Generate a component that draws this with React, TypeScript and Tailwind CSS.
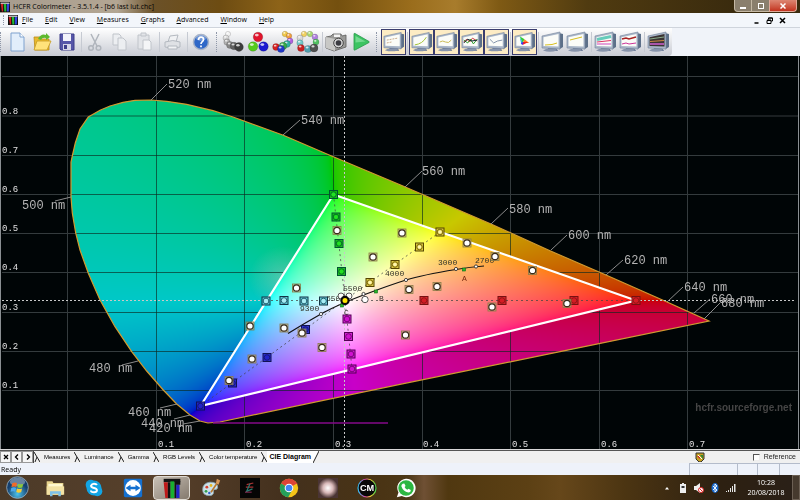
import React, { useLayoutEffect, useRef } from "react";

/* ---------- CIE chart data (chart space, origin at window top-left) ---------- */

const TOP = 56;
const CHART_W = 800;
const CHART_H = 394;

const LOCUS =
  "M208 423 L200 421 L190 415 L176.700 404 L163.300 390 L146.700 371 L131.700 351.700 L115 326.700 L100 300 L88.300 273.300 L80 250 L75.700 233 L72.300 213 L71 197 L71 162 L72.300 156 L75.300 143 L80 129 L88.300 117 L100 110.300 L110 106 L123 102.300 L135 100.300 L151 100 L166.700 101.300 L186.700 104.300 L213 110.700 L233 117 L283.300 135.300 L333.300 156.700 L400 184.700 L491 224 L550 250.700 L606 275 L667 302 L709 321 L560 351.700 L400 384.300 L220 422 Z";
const TRIANGLE = "M333.500 194.500 L636 300.500 L200.500 406 Z";

const X_TICKS = [67.5, 156.5, 244.5, 333.5, 422.5, 510.5, 599.5, 687.5];
const Y_TICKS = [76.5, 116, 155.5, 194.5, 233.5, 272.5, 312.5, 351.5, 390.5];

const X_LABELS: [string, number][] = [
  ["0.1", 158], ["0.2", 246], ["0.3", 335], ["0.4", 423], ["0.5", 512], ["0.6", 601], ["0.7", 689],
];
const Y_LABELS: [string, number][] = [
  ["0.8", 114], ["0.7", 153], ["0.6", 192], ["0.5", 231], ["0.4", 270], ["0.3", 310], ["0.2", 349], ["0.1", 388],
];

/* wavelength, text x, baseline, leader from/to */
const WAVES: [string, number, number, number, number, number, number][] = [
  ["520 nm", 168, 88, 151, 100, 167, 84],
  ["540 nm", 301, 124, 283, 135, 300, 120],
  ["560 nm", 422, 175, 405, 187, 422, 171],
  ["580 nm", 509, 213, 491, 224, 508, 208],
  ["600 nm", 568, 239, 551, 250, 567, 235],
  ["620 nm", 624, 264, 606, 275, 623, 260],
  ["640 nm", 684, 291, 667, 302, 683, 287],
  ["660 nm", 711, 303, 694, 313, 710, 299],
  ["680 nm", 721, 307, 704, 319, 720, 303],
  ["500 nm", 22, 209, 55, 201, 71, 197],
  ["480 nm", 89, 372, 122, 365, 138, 361],
  ["460 nm", 128, 416, 160, 408, 177, 404],
  ["440 nm", 141, 427, 174, 419, 190, 415],
  ["420 nm", 149, 432, 183, 424, 200, 421],
];

const TARGETS: [string, string, [number, number][]][] = [
  ["#10b810", "#053", [[333.5, 194.5], [336, 217], [339, 243.5], [341.5, 271.5]]],
  ["#d010d0", "#505", [[347, 319], [348.5, 336.5], [351, 354], [352, 369]]],
  ["#2222c8", "#115", [[305.5, 329.5], [267, 357.5], [232.5, 383], [200.5, 406]]],
  ["#5cc4d4", "#134", [[266, 301], [284, 300.5], [304, 301], [323.5, 301]]],
  ["#d41c24", "#711", [[424, 300.5], [502, 300.5], [574, 300.5], [636, 300.5]]],
  ["#dcc83c", "#540", [[440, 232], [419.5, 247], [395, 264.5], [370, 282.5]]],
];

const MEASURED: [number, number][] = [
  [337, 230.5], [402, 233], [373, 257], [467, 243], [495, 256.5], [532.5, 270.5],
  [409, 289.5], [437, 286.5], [492, 307], [567, 303.5], [405.5, 335], [296.5, 288],
  [250, 326], [284, 328], [302, 333], [252, 359], [322, 347.5], [229, 380.5],
];

/*
 * Fills the spectral locus with the sRGB colour of each chromaticity.
 * Colours out of gamut are pulled toward white onto the gamut edge and dimmed.
 */
function paintGamut(canvas: HTMLCanvasElement) {
  const ctx = canvas.getContext("2d");
  if (!ctx) return;
  const img = ctx.createImageData(CHART_W, CHART_H);
  for (let py = 0; py < CHART_H; py++) {
    for (let px = 0; px < CHART_W; px++) {
      const x = (px - 67.8) / 886;
      const y = (429.5 - (py + TOP)) / 392;
      const z = 1 - x - y;
      const r = 3.2406 * x - 1.5372 * y - 0.4986 * z;
      const g = -0.9689 * x + 1.8758 * y + 0.0415 * z;
      const b = 0.0557 * x - 0.204 * y + 1.057 * z;
      const low = Math.min(0, r, g, b);
      const top = Math.max(r, g, b) - low;
      const gain = low < 0 ? 200 : 255;
      const o = (py * CHART_W + px) * 4;
      [r, g, b].forEach((v, i) => {
        img.data[o + i] = gain * Math.pow((v - low) / top, 0.4545);
      });
      img.data[o + 3] = 255;
    }
  }
  ctx.putImageData(img, 0, 0);
  ctx.translate(0, -TOP);
  ctx.globalCompositeOperation = "destination-in";
  ctx.fill(new Path2D(LOCUS));
}

function CieChart() {
  const ref = useRef<HTMLCanvasElement>(null);
  useLayoutEffect(() => {
    if (ref.current) paintGamut(ref.current);
  }, []);
  const grid = (
    <>
      {X_TICKS.map((x) => <path key={"x" + x} d={`M${x} 56V449`} />)}
      {Y_TICKS.map((y) => <path key={"y" + y} d={`M2 ${y}H798`} />)}
    </>
  );
  return (
    <svg viewBox="0 56 800 394" className="block w-full bg-[#000506]" role="img" aria-label="CIE Diagram">
      <defs>
        <clipPath id="ring"><path d={LOCUS + TRIANGLE} clipRule="evenodd" /></clipPath>
        <radialGradient id="haze">
          <stop offset="0" stopColor="#9cc8b8" stopOpacity=".5" />
          <stop offset="1" stopColor="#9cc8b8" stopOpacity="0" />
        </radialGradient>
      </defs>
      <g stroke="#343b3d" strokeWidth="1">{grid}</g>
      <foreignObject x="0" y="56" width="800" height="394">
        <canvas ref={ref} width={CHART_W} height={CHART_H} className="block" />
      </foreignObject>
      <ellipse cx="283" cy="278" rx="34" ry="32" fill="url(#haze)" clipPath="url(#ring)" />
      <g stroke="#0a2a20" strokeOpacity=".65" clipPath="url(#ring)">{grid}</g>
      <path d={LOCUS} fill="none" stroke="#d09a30" strokeWidth="1.200" />
      <path d="M213 423H388" stroke="#850a8a" strokeWidth="1.500" />

      <g stroke="#c8c8c8" strokeDasharray="2 2">
        <path d="M344.500 56V449" />
        <path d="M2 300.500H266M636 300.500H794" />
      </g>
      <g stroke="#444" strokeOpacity=".75" strokeDasharray="2 3" fill="none">
        <path d="M266 300.500H636M333.500 194.500L345 300L352 369M440 232L345 300L200.500 406" />
      </g>
      <path d={TRIANGLE} fill="none" stroke="#fff" strokeWidth="2.200" />

      <g fontFamily="'Liberation Mono', monospace" fontSize="12" fill="#b4b4b4">
        {WAVES.map(([t, x, y, x1, y1, x2, y2]) => (
          <g key={t}>
            <path d={`M${x1} ${y1}L${x2} ${y2}`} stroke="#8c8c8c" />
            <text x={x} y={y} fontSize="12">{t}</text>
          </g>
        ))}
      </g>
      <g fontFamily="'Liberation Mono', monospace" fontSize="9" fill="#e0e0e0">
        {X_LABELS.map(([t, x]) => <text key={t} x={x} y="447">{t}</text>)}
        {Y_LABELS.map(([t, y]) => <text key={t} x="2" y={y}>{t}</text>)}
      </g>

      <path d="M288 333.500Q305 323 321 314T363.500 295T406 280T456 269.500Q470 267 484 266" fill="none" stroke="#111" strokeWidth="1.200" />
      <g fontFamily="'Liberation Mono', monospace" fontSize="8" fill="#33332a">
        <text x="300" y="311">9300</text>
        <text x="326" y="301">6500</text>
        <text x="343" y="291">5500</text>
        <text x="385" y="276">4000</text>
        <text x="438" y="265">3000</text>
        <text x="475" y="263">2700</text>
        <text x="462" y="281" fill="#7a2a10">A</text>
        <text x="379" y="301">B</text>
        <text x="344" y="315">C</text>
      </g>
      {[[321, 314], [363.5, 294], [406, 280], [456, 269], [476, 266.5]].map(([x, y]) => (
        <circle key={x} cx={x} cy={y} r="1.600" fill="#fff" stroke="#222" strokeWidth=".8" />
      ))}
      {[[464, 269.5], [376, 291.5], [342, 305.5]].map(([x, y]) => (
        <rect key={x} x={x - 1.5} y={y - 1.5} width="3" height="3" fill="#2ab82a" stroke="#0a6a1a" strokeWidth=".6" />
      ))}

      {TARGETS.map(([fill, edge, pts]) =>
        pts.map(([x, y]) => (
          <g key={fill + x} stroke={edge}>
            <rect x={x - 4} y={y - 4} width="8" height="8" fill={fill} fillOpacity=".9" strokeWidth="1" />
            <circle cx={x} cy={y} r="2.800" fill={fill} strokeWidth=".7" />
            {edge === "#053" && <circle cx={x} cy={y} r="2" fill="#22e022" stroke="none" />}
            {edge === "#540" && <circle cx={x} cy={y} r="1.800" fill="#fff6b0" stroke="none" />}
            {edge === "#134" && <circle cx={x} cy={y} r="2.200" fill="#a8ecf4" stroke="none" />}
          </g>
        )),
      )}
      {MEASURED.map(([x, y]) => (
        <g key={x}>
          <rect x={x - 4} y={y - 4} width="8" height="8" fill="#c8b878" fillOpacity=".55" stroke="#8a7a48" strokeWidth=".8" />
          <circle cx={x} cy={y} r="3.200" fill="#fff" stroke="#3a2c1c" strokeWidth="1.200" />
        </g>
      ))}
      <g fill="#fff" fillOpacity=".8" stroke="#444" strokeWidth=".9">
        <circle cx="341" cy="296" r="3" />
        <circle cx="349" cy="296" r="3" />
        <circle cx="365" cy="299.500" r="3.200" fillOpacity="1" />
      </g>
      <circle cx="345" cy="300.500" r="3.600" fill="#ffe600" stroke="#080808" strokeWidth="2.200" />

      <text x="792" y="411" textAnchor="end" fontFamily="'Liberation Sans', Arial, sans-serif" fontWeight="700" fontSize="10" fill="#454545">
        hcfr.sourceforge.net
      </text>
      <path d="M.5 56V450M798.500 56V450" stroke="#8a8f92" />
      <path d="M0 449.500H800" stroke="#d8d8d8" />
    </svg>
  );
}

/* ---------- toolbar drawings ---------- */

type Kids = { children?: React.ReactNode };

function Ico({ children }: Kids) {
  return <svg viewBox="0 0 24 24" className="block size-6" aria-hidden="true">{children}</svg>;
}

function Ball({ x, y, r, c }: { x: number; y: number; r: number; c: string }) {
  return (
    <g>
      <circle cx={x} cy={y} r={r} fill={c} stroke="#000" strokeOpacity=".25" strokeWidth=".6" />
      <ellipse cx={x - r * 0.25} cy={y - r * 0.4} rx={r * 0.4} ry={r * 0.28} fill="#fff" fillOpacity=".75" />
    </g>
  );
}

function Monitor({ children, dark }: Kids & { dark?: boolean }) {
  return (
    <Ico>
      <path d="M8 18h8l2 3H7z" fill="#5b6d8c" />
      <path d="M3 20.500q7 2.500 14 0l-1-1.500H6z" fill="#8794ab" />
      <path d="M19 3l4 1v13l-4 2.500z" fill="#5d7089" />
      <path d="M2 6L20 2v17L2 18z" fill="#a9b6c8" stroke="#73839b" strokeWidth=".6" />
      <path d="M3.500 7.200L18.500 4v12.500l-15-.5z" fill={dark ? "#3b3434" : "#fbfcf8"} />
      <g fill="none" strokeWidth="1">{children}</g>
    </Ico>
  );
}

const Bars = () => (
  <>
    <rect width="16" height="16" fill="#111" />
    <path d="M1 2h4v13H3z" fill="#c22" />
    <path d="M6 3h4v12H7z" fill="#2b3" />
    <path d="M11 2h4l-1 13h-3z" fill="#34d" />
    <path d="M1 1h14v2H1z" fill="#ccc" />
  </>
);

const NewIcon = () => (
  <Ico><path d="M6 3h9l4 4v14H6z" fill="#e2eefb" stroke="#7fa2cf" /><path d="M15 3v4h4" fill="#fff" stroke="#7fa2cf" /></Ico>
);
const OpenIcon = () => (
  <Ico>
    <path d="M4 7h6l1 2h8v11H5z" fill="#e9b92c" stroke="#b98a18" strokeWidth=".8" />
    <path d="M4 20l3-9h14l-4 9z" fill="#ffe27a" stroke="#c59a22" strokeWidth=".8" />
    <path d="M8 9q3-6 8-4V3l4 4-4 3V8q-4-1-5 2z" fill="#5cb82e" />
  </Ico>
);
const SaveIcon = () => (
  <Ico>
    <path d="M5 4h14v16H6l-1-1z" fill="#5656a8" stroke="#3d3d8a" />
    <path d="M8 4h8v7H8z" fill="#f2f2fa" /><path d="M8 14h8v6H8z" fill="#d4d4e6" /><path d="M9 15h3v4H9z" fill="#3d3d8a" />
  </Ico>
);
const CutIcon = () => (
  <Ico>
    <g fill="none" stroke="#b0b5bc" strokeWidth="1.500">
      <path d="M8 4l6 12M16 4l-6 12" /><circle cx="8" cy="18" r="2.300" /><circle cx="15.500" cy="18" r="2.300" />
    </g>
  </Ico>
);
const CopyIcon = () => (
  <Ico><g fill="#eceef1" stroke="#c0c4ca"><path d="M5 4h6l2 2v9H5z" /><path d="M10 8h5l3 3v9h-8z" /></g></Ico>
);
const PasteIcon = () => (
  <Ico><g fill="#e2e4e8" stroke="#c0c4ca"><path d="M5 5h11v14H5z" /><path d="M8 3h5v3H8z" /><path d="M10 10h6l2 2v8h-8z" fill="#f4f5f7" /></g></Ico>
);
const PrintIcon = () => (
  <Ico>
    <g fill="#dfe1e5" stroke="#b4b9c0">
      <path d="M9 6l8-1-2 7H7z" fill="#f1f2f4" /><path d="M4 12q8-3 15 0v5q-7 3-15 0z" /><path d="M7 16h9v3H7z" fill="#f1f2f4" />
    </g>
  </Ico>
);
const HelpIcon = () => (
  <Ico>
    <circle cx="12" cy="12" r="7.500" fill="#2f68c8" stroke="#a8b4c8" strokeWidth="1.500" />
    <ellipse cx="12" cy="8" rx="5" ry="3" fill="#fff" fillOpacity=".3" />
    <path d="M9.500 10q0-2.800 2.500-2.800T14.500 9.500q0 1.200-1.200 2.100T12 14M12 15.500v1.800" fill="none" stroke="#fff" strokeWidth="1.700" />
  </Ico>
);
const GreysIcon = () => (
  <Ico>
    <Ball x={7} y={4} r={2.6} c="#f2f2f2" /><Ball x={5} y={8} r={3} c="#d8d8d8" /><Ball x={6} y={12} r={3.200} c="#b0b0b0" />
    <Ball x={9} y={15} r={3.500} c="#888" /><Ball x={13} y={16} r={3.800} c="#606060" /><Ball x={18} y={17} r={4.400} c="#3c3c3c" />
  </Ico>
);
const PrimariesIcon = () => (
  <Ico><Ball x={12} y={7} r={4.800} c="#e0142c" /><Ball x={7} y={16.500} r={4.800} c="#54cc1c" /><Ball x={17.500} y={16.500} r={4.800} c="#1a1ad0" /></Ico>
);
const SaturationIcon = () => (
  <Ico>
    <Ball x={14} y={4} r={2.800} c="#f0c848" /><Ball x={18} y={6} r={2.800} c="#f0a040" /><Ball x={19} y={11} r={3} c="#b060e0" />
    <Ball x={16} y={14} r={3.400} c="#30b0a0" /><Ball x={12} y={16} r={3.800} c="#38a848" /><Ball x={5} y={17} r={3.400} c="#d42020" />
    <Ball x={10} y={19} r={3.600} c="#2038c8" />
  </Ico>
);
const RingIcon = () => (
  <Ico>
    <Ball x={8} y={4} r={2.800} c="#f0d060" /><Ball x={14} y={4} r={2.800} c="#a8d870" /><Ball x={19} y={7} r={2.900} c="#b080e0" />
    <Ball x={20} y={12} r={3} c="#50c060" /><Ball x={4} y={8} r={3} c="#d8d8d8" /><Ball x={4} y={13} r={3.200} c="#70c8c8" />
    <Ball x={5} y={18} r={3.500} c="#c82020" /><Ball x={12} y={19} r={3.600} c="#50a0b0" /><Ball x={18} y={18} r={4} c="#505050" />
  </Ico>
);
const CameraIcon = () => (
  <Ico>
    <path d="M2 7l5-1 2-2h8l1 2 4-1v12l-12 4-8-3z" fill="#9a9a98" stroke="#5c5c5a" strokeWidth=".8" />
    <path d="M2 7l9 2v12l-9-3z" fill="#c8c8c6" /><path d="M10 4.500h6v2.500h-6z" fill="#f4f4f4" />
    <circle cx="14.500" cy="13" r="4.800" fill="#d4d4d4" stroke="#444" /><circle cx="14.500" cy="13" r="2.800" fill="#3a3a40" />
  </Ico>
);
const PlayIcon = () => (
  <Ico><path d="M5 4q0-1 1-.5l14 8q1 .5 0 1L6 20q-1 .5-1-.5z" fill="#3cc462" stroke="#28994a" strokeWidth=".8" /><path d="M6.500 6l10 5.500-10 1z" fill="#8ce4a4" fillOpacity=".7" /></Ico>
);

function Tool({ label, on, children }: Kids & { label: string; on?: boolean }) {
  return (
    <button
      type="button"
      aria-label={label}
      className={on ? "w-[25px] border border-[#3a3d6e] bg-[#fdecc4] *:w-full" : "w-[25px]"}
    >
      {children}
    </button>
  );
}
const Sep = () => <span className="mx-px h-5 w-px bg-[#c6cad2]" />;
const Grip = () => <span className="ml-0.5 mr-px h-5 w-1 border-l border-dotted border-[#8f97a8] first:ml-0" />;

function Toolbar() {
  return (
    <div className="flex h-7 bg-[#f0f3f9]">
      <div className="flex items-center rounded-br bg-linear-to-b from-white to-[#c9ccd4] pr-px">
        <Grip />
        <Tool label="New"><NewIcon /></Tool>
        <Tool label="Open"><OpenIcon /></Tool>
        <Tool label="Save"><SaveIcon /></Tool>
        <Sep />
        <Tool label="Cut"><CutIcon /></Tool>
        <Tool label="Copy"><CopyIcon /></Tool>
        <Tool label="Paste"><PasteIcon /></Tool>
        <Sep />
        <Tool label="Print"><PrintIcon /></Tool>
        <Sep />
        <Tool label="Help"><HelpIcon /></Tool>
        <Grip />
        <Tool label="Measure grays"><GreysIcon /></Tool>
        <Tool label="Measure primaries"><PrimariesIcon /></Tool>
        <Tool label="Measure saturations"><SaturationIcon /></Tool>
        <Tool label="Measure all"><RingIcon /></Tool>
        <Sep />
        <Tool label="Capture"><CameraIcon /></Tool>
        <Tool label="Run"><PlayIcon /></Tool>
        <Grip />
        <Tool label="Measures" on><Monitor><path d="M5 10l11-2M5 13l5-1" stroke="#c8a888" strokeDasharray="2 1" /></Monitor></Tool>
        <Sep />
        <Tool label="Luminance" on><Monitor><path d="M5 15q8-1 12-8" stroke="#a0c030" /></Monitor></Tool>
        <Tool label="Gamma" on><Monitor><path d="M5 12q3-2 6 0t6-2" stroke="#c8b850" /></Monitor></Tool>
        <Tool label="RGB levels" on>
          <Monitor><path d="M4 12l3-3 3 3 3-4 5 3" stroke="#c33" /><path d="M4 10l4 3 3-4 3 5 4-5" stroke="#292" /><path d="M4 13l4-4 4 2 6-1" stroke="#123" /></Monitor>
        </Tool>
        <Tool label="Color temperature" on><Monitor><path d="M5 9l4 4 4-2 5-1" stroke="#8090a8" /></Monitor></Tool>
        <Sep />
        <Tool label="CIE diagram" on>
          <Monitor>
            <path d="M7 6l5 3-2 4z" fill="#3c3" /><path d="M12 9l5 4-7 0z" fill="#f82" /><path d="M10 12h6l-6 3z" fill="#e22" /><path d="M7 7l3 5-1 3z" fill="#2bd" /><path d="M8 13l3-1-1 3z" fill="#42e" />
          </Monitor>
        </Tool>
        <Sep />
        <Tool label="Near black"><Monitor><path d="M5 15q8 0 12-2" stroke="#d8c020" /></Monitor></Tool>
        <Tool label="Near white"><Monitor><path d="M5 10l12-3" stroke="#d8c020" /></Monitor></Tool>
        <Sep />
        <Tool label="Saturation luminance">
          <Monitor><path d="M4 9.500l14-3" stroke="#6cb" strokeWidth="3" /><path d="M4 12l14-1.500" stroke="#d36" /><path d="M4 14h14" stroke="#c4b" /></Monitor>
        </Tool>
        <Tool label="Saturation shift">
          <Monitor><path d="M4 9l4-1 3 1 7-2" stroke="#a22" strokeWidth="1.500" /><path d="M4 14l4-1 3 1 7-1" stroke="#c39" /></Monitor>
        </Tool>
        <Sep />
        <Tool label="Combined view">
          <Monitor dark><path d="M4 9l14-2" stroke="#8a8" /><path d="M4 11.500l14-1" stroke="#c84" /><path d="M4 14h14" stroke="#a5a" strokeWidth="2" /></Monitor>
        </Tool>
      </div>
    </div>
  );
}

/* ---------- window chrome ---------- */

const MENUS = ["File", "Edit", "View", "Measures", "Graphs", "Advanced", "Window", "Help"];

function TitleBar() {
  return (
    <header className="flex h-[13px] items-center bg-[#3a2b0e] text-[7px] leading-[13px]">
      <div className="flex h-full flex-1 items-center gap-[3px] bg-[linear-gradient(90deg,#a79c8e_0%,#b3a693_16%,#6b5128_21%,#6d4c12_30%,#8d6318_38%,#74500f_46%,#9a6d1c_56%,#a87c2c_62%,#7f5a14_68%,#503b10_80%,#3a2b0e_100%)]">
        <svg viewBox="0 0 16 16" className="size-2.5" aria-hidden="true"><Bars /></svg>
        <h1 className="text-black">HCFR Colorimeter - 3.5.1.4 - [b6 last lut.chc]</h1>
      </div>
      <div className="flex h-full pr-[3px]">
        <button type="button" aria-label="Minimize" className="flex h-3 w-[18px] items-center justify-center rounded-bl border border-t-0 border-[#c4b8a4] bg-[#8a7f6d]">
          <span className="mt-1 h-0.5 w-1.5 bg-white" />
        </button>
        <button type="button" aria-label="Restore" className="flex h-3 w-[17px] items-center justify-center border-b border-[#c4b8a4] bg-[#8a7f6d]">
          <span className="size-1.5 border border-white" />
        </button>
        <button type="button" aria-label="Close" className="flex h-3 w-7 items-center justify-center rounded-br border border-t-0 border-[#e0a898] bg-linear-to-b from-[#dc8672] to-[#c2301c]">
          <svg viewBox="0 0 6 6" className="size-1.5"><path d="M.5.500l5 5m0-5l-5 5" stroke="#fff" strokeWidth="1.500" /></svg>
        </button>
      </div>
    </header>
  );
}

function MenuBar() {
  return (
    <nav className="flex h-[15px] items-center border-b border-[#cfd4dc] bg-[#f3f6fb] pl-[3px] text-[7px] leading-[14px]">
      <span className="mr-1 h-2.5 border-l border-dotted border-[#8f97a8]" />
      <svg viewBox="0 0 16 16" className="mr-1 size-2.5" aria-hidden="true"><Bars /></svg>
      <div className="flex gap-3">
        {MENUS.map((m) => (
          <button key={m} type="button" className="text-black">
            <span className="underline">{m[0]}</span>{m.slice(1)}
          </button>
        ))}
      </div>
      <div className="ml-auto mr-3.5 flex gap-1.5">
        <button type="button" aria-label="Minimize document"><svg viewBox="0 0 7 7" className="size-[7px]"><path d="M1.500 6h4" stroke="#000" strokeWidth="1.500" /></svg></button>
        <button type="button" aria-label="Restore document"><svg viewBox="0 0 7 7" className="size-[7px]"><path d="M2.500 2.500V1h4v3H5M1 3.500h4v3H1zM1 3h4M2.500 1h4" fill="none" stroke="#000" /></svg></button>
        <button type="button" aria-label="Close document"><svg viewBox="0 0 7 7" className="size-[7px]"><path d="M1 1l5 5m0-5L1 6" stroke="#000" strokeWidth="1.500" /></svg></button>
      </div>
    </nav>
  );
}

function TabEdge() {
  return (
    <svg viewBox="0 0 6 12" className="h-3 w-1.5" aria-hidden="true">
      <path d="M0 1l6 10M3 6L1 11" fill="none" stroke="#222" strokeWidth="1" />
    </svg>
  );
}

function TabStrip() {
  const arrows: [string, string][] = [["Close tab", "M1 1l4 4m0-4L1 5"], ["Previous tab", "M4 0.500L1.500 3L4 5.500"], ["Next tab", "M2 0.500L4.500 3L2 5.500"]];
  return (
    <div className="flex h-[13px] items-center border-t border-[#555] bg-[#f0f0f0] font-['Liberation_Sans',Arial,sans-serif] text-[6px] leading-3">
      <div className="flex border-r border-[#444]">
        {arrows.map(([label, d]) => (
          <button key={label} type="button" aria-label={label} className="flex h-3 w-[11px] items-center justify-center border border-[#999] bg-[#f6f6f6]">
            <svg viewBox="0 0 6 6" className="size-1.5"><path d={d} fill="none" stroke="#000" strokeWidth="1.300" /></svg>
          </button>
        ))}
      </div>
      <div role="tablist" className="flex items-center">
        {["Measures", "Luminance", "Gamma", "RGB Levels", "Color temperature"].map((t) => (
          <React.Fragment key={t}>
            <TabEdge />
            <button type="button" role="tab" aria-selected={false} className="px-1 text-black">{t}</button>
          </React.Fragment>
        ))}
        <TabEdge />
        <button type="button" role="tab" aria-selected className="bg-white px-0.5 text-[7px] font-bold text-black">CIE Diagram</button>
        <svg viewBox="0 0 6 12" className="h-3 w-1.5" aria-hidden="true"><path d="M0 0h6L0 12z" fill="#fff" /><path d="M6 0L0 12" stroke="#222" /></svg>
      </div>
      <svg viewBox="0 0 10 10" className="ml-auto mr-12 size-2.5" aria-hidden="true">
        <path d="M1 1h8v6L6 10H4L1 7z" fill="#c8a020" stroke="#333" />
        <path d="M2 4h3v3z" fill="#c22" /><path d="M5 3h3v4z" fill="#383" /><path d="M3 3l4 4" stroke="#fff" />
      </svg>
      <label className="flex items-center gap-1 pr-1 text-[7px] text-[#222]">
        <input type="checkbox" className="size-[7px] appearance-none border border-[#eee] border-l-[#555] border-t-[#555] bg-white" />
        Reference
      </label>
    </div>
  );
}

function StatusBar() {
  return (
    <footer className="flex h-3 bg-[#eef2fa] text-[7px] leading-[13px] text-black">
      <span className="flex-1 pl-px">Ready</span>
      <span className="w-12 border-l border-t border-[#b4bccb]" />
      <span className="w-5 border-l border-t border-[#b4bccb]" />
      <span className="w-[22px] border-l border-t border-[#b4bccb]" />
      <span className="w-[21px] border-l border-t border-[#b4bccb]" />
    </footer>
  );
}

/* ---------- taskbar ---------- */

const PINNED: [string, React.ReactNode][] = [
  ["Explorer", <>
    <path d="M2 4h7l1 2h12v14H2z" fill="#e8d48c" /><path d="M4 7h17v4H4z" fill="#fff8d0" /><path d="M2 10h21v10H2z" fill="#f3e2a4" />
    <path d="M6 16h13v6h-3v-3H9v3H6z" fill="#7cc0e8" />
  </>],
  ["Skype", <>
    <circle cx="8" cy="8" r="6" fill="#12a5e4" /><circle cx="16" cy="16" r="6" fill="#12a5e4" /><circle cx="12" cy="12" r="9" fill="#12a5e4" />
    <path d="M15.500 8.500Q14.500 6.800 12 6.800T8.500 9.200Q8.500 11.300 12 12T15.500 14.800Q15.500 17.200 12 17.200T8.300 15" fill="none" stroke="#fff" strokeWidth="2.400" />
  </>],
  ["TeamViewer", <>
    <rect x="1" y="1" width="22" height="22" rx="2" fill="#1470d0" /><circle cx="12" cy="12" r="9.500" fill="#fff" />
    <path d="M3 12l6-4v2.500h6V8l6 4-6 4v-2.500H9V16z" fill="#1470d0" />
  </>],
  ["HCFR", <>
    <path d="M2 1h20v4H2z" fill="#141414" /><path d="M2 5h5v19H4z" fill="#c01818" /><path d="M10 4h5v20h-5z" fill="#18b030" />
    <path d="M17 8h4v16h-4z" fill="#2020c8" /><path d="M7 5h3v19H7zM15 4h2v20h-2zM17 4h5v4h-5z" fill="#111" />
  </>],
  ["Paint", <>
    <path d="M2 14q0-8 9-9 9 0 9 6 0 3-4 3-2 1-1 3 0 4-5 4-8 0-8-7z" fill="#cfe2ea" stroke="#8ca8b4" />
    <circle cx="7" cy="11" r="1.700" fill="#d84030" /><circle cx="12" cy="9" r="1.700" fill="#e8b820" /><circle cx="6" cy="16" r="1.700" fill="#30a050" /><circle cx="10" cy="18" r="1.500" fill="#3060c8" />
    <path d="M12 17L20 5" stroke="#b87830" strokeWidth="2" /><path d="M18 6l1-5 4 2-2 5z" fill="#d89858" />
  </>],
  ["Calibration", <>
    <rect width="24" height="24" fill="#050505" /><path d="M8 8l8-2M7 11h9" stroke="#a33" strokeWidth="1.500" /><path d="M12 7l-4 9 7-3" fill="none" stroke="#2a7a70" strokeWidth="1.500" /><path d="M6 17h8" stroke="#a36" />
  </>],
  ["Chrome", <>
    <circle cx="12" cy="12" r="11" fill="#f4c318" /><path d="M12 12L2.500 6.500A11 11 0 0 1 21.500 6.500z" fill="#dc4437" />
    <path d="M12 12L2.500 6.500A11 11 0 0 0 11 23l4-7z" fill="#25a05a" /><path d="M12 6.500h10" stroke="#dc4437" strokeWidth="1" />
    <circle cx="12" cy="12" r="5.200" fill="#fff" /><circle cx="12" cy="12" r="4" fill="#4285f4" />
  </>],
  ["Viewer", <>
    <defs><radialGradient id="flare"><stop offset="0" stopColor="#fff" /><stop offset=".5" stopColor="#d8b8b8" /><stop offset="1" stopColor="#4a3434" /></radialGradient></defs>
    <rect width="24" height="24" fill="url(#flare)" />
  </>],
  ["CalMAN", <>
    <defs><linearGradient id="hue"><stop offset="0" stopColor="#30c0f0" /><stop offset=".4" stopColor="#e040a0" /><stop offset=".7" stopColor="#f0d030" /><stop offset="1" stopColor="#40d050" /></linearGradient></defs>
    <circle cx="12" cy="12" r="10.800" fill="#080808" stroke="url(#hue)" strokeWidth="1.400" />
    <text x="12" y="16" textAnchor="middle" fontFamily="'Liberation Sans', Arial, sans-serif" fontWeight="700" fontSize="11" fill="#fff">CM</text>
  </>],
  ["WhatsApp", <>
    <path d="M12 1a11 11 0 1 1-5 20.500L1 23l2-5.500A11 11 0 0 1 12 1z" fill="#fff" /><circle cx="12" cy="12" r="9.300" fill="#2cb742" />
    <path d="M8 7l2-.5 1.500 3-1.200 1.400q1.200 2.300 3.300 3.200L15 12.800l2.700 1.500q0 3-3 3-6-.8-8.300-7.300Q6.500 8 8 7z" fill="#fff" />
  </>],
];

function Taskbar() {
  return (
    <div className="flex h-[25px] items-center bg-[linear-gradient(90deg,#4c3a28_0%,#57402b_20%,#43301d_36%,#4a3414_48%,#4c3818_51%,#6f5034_53%,#503810_56%,#5c4014_66%,#66471a_70%,#4c3512_78%,#2d2011_90%,#2a2018_100%)] text-white">
      <button type="button" aria-label="Start" className="flex w-[35px] justify-center">
        <svg viewBox="0 0 24 24" className="size-[23px]">
          <defs><radialGradient id="orb" cy=".8"><stop offset="0" stopColor="#4cc4ec" /><stop offset="1" stopColor="#17406e" /></radialGradient></defs>
          <circle cx="12" cy="12" r="11.300" fill="url(#orb)" stroke="#a4b8c4" strokeWidth=".8" />
          <ellipse cx="12" cy="6" rx="8" ry="4.500" fill="#fff" fillOpacity=".35" />
          <path d="M6.500 7.500q3-1.500 5 0l-.8 4q-2-1.300-5 0z" fill="#f06a28" /><path d="M12.500 8q2.500 1.300 5.500 0l-1 4q-3 1-5.200-.3z" fill="#8cc83c" />
          <path d="M5.500 12.500q3-1.500 5 0l-.8 4q-2-1.300-5 0z" fill="#4ca8ec" /><path d="M11.500 13q2.500 1.300 5.300 0l-1 4q-3 1-5.100-.3z" fill="#f8cc34" />
        </svg>
      </button>
      {PINNED.map(([name, art]) => (
        <button
          key={name}
          type="button"
          aria-label={name}
          className={
            name === "HCFR"
              ? "mx-px flex h-6 w-[37px] items-center justify-center rounded-sm border border-[#e0dad2] bg-linear-to-br from-[#c8c0b6] to-[#857a6e]"
              : "flex w-[39px] justify-center"
          }
        >
          <svg viewBox="0 0 24 24" className="size-5">{art}</svg>
        </button>
      ))}
      <div className="ml-auto flex items-center gap-1.5">
        <svg viewBox="0 0 10 10" className="size-2.5" aria-hidden="true"><path d="M3 6.500L5 4l2 2.500z" fill="#fff" /></svg>
        <svg viewBox="0 0 10 10" className="size-2.5" aria-hidden="true"><path d="M4 0h2v1h2v9H2V1h2z" fill="#eee" /><path d="M3.500 3h3v2h-3z" fill="#333" /></svg>
        <svg viewBox="0 0 10 10" className="size-2.5" aria-hidden="true"><path d="M0 3h2l4-3v10L2 7H0z" fill="#eee" /><circle cx="7" cy="7" r="2.500" fill="#fff" stroke="#d22" /><path d="M5.500 5.500l3 3" stroke="#d22" /></svg>
        <svg viewBox="0 0 10 10" className="size-2.5" aria-hidden="true"><ellipse cx="5" cy="5" rx="3.500" ry="5" fill="#1c6cd0" /><path d="M3 3l4 4-2 2V1l2 2-4 4" fill="none" stroke="#fff" strokeWidth=".9" /></svg>
        <svg viewBox="0 0 10 10" className="size-2.5" aria-hidden="true"><path d="M0 8h1v1H0zM2 7h1v2H2zM4 5h1v4H4zM6 3h1v6H6zM8 1h1.500v8H8z" fill="#e4e4e4" /></svg>
      </div>
      <div className="ml-2.5 w-10 text-center text-[7px] leading-2.5">
        <div>10:28</div>
        <div>20/08/2018</div>
      </div>
      <button type="button" aria-label="Show desktop" className="ml-1.5 h-full w-2 border border-[#6c6054] bg-[#463a2e]" />
    </div>
  );
}

export default function App() {
  return (
    <div className="flex min-h-screen flex-col overflow-hidden bg-[#f0f0f0] font-['Open_Sans','Noto_Sans',sans-serif]">
      <TitleBar />
      <MenuBar />
      <Toolbar />
      <main className="flex-1"><CieChart /></main>
      <TabStrip />
      <StatusBar />
      <Taskbar />
    </div>
  );
}
